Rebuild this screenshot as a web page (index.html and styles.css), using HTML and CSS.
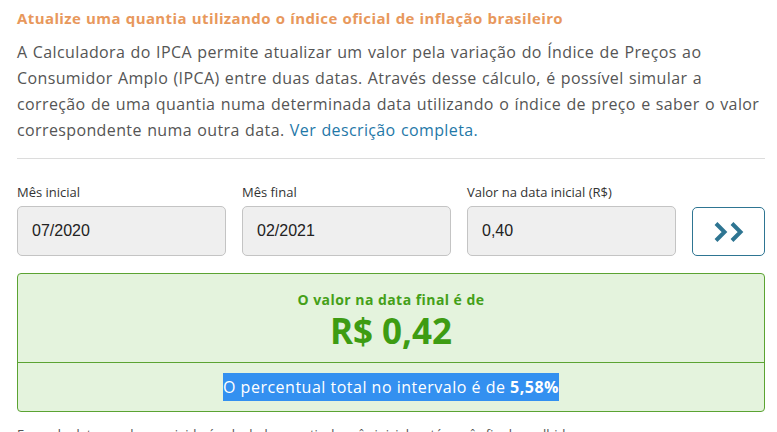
FILE: index.html
```html
<!DOCTYPE html>
<html lang="pt-BR">
<head>
<meta charset="utf-8">
<title>Calculadora do IPCA</title>
<link rel="stylesheet" href="styles.css">
</head>
<body>
<main class="page">
  <h2 class="title">Atualize uma quantia utilizando o índice oficial de inflação brasileiro</h2>
  <p class="intro">A Calculadora do IPCA permite atualizar um valor pela variação do Índice de Preços ao Consumidor Amplo (IPCA) entre duas datas. Através desse cálculo, é possível simular a correção de uma quantia numa determinada data utilizando o índice de preço e saber o valor correspondente numa outra data. <a class="link" href="#">Ver descrição completa.</a></p>
  <hr class="rule">
  <form class="calc">
    <label class="field">
      <span class="label">Mês inicial</span>
      <span class="input">07/2020</span>
    </label>
    <label class="field">
      <span class="label">Mês final</span>
      <span class="input">02/2021</span>
    </label>
    <label class="field">
      <span class="label">Valor na data inicial (R$)</span>
      <span class="input">0,40</span>
    </label>
    <button class="go" type="button" aria-label="Calcular">
      <svg width="32" height="22" viewBox="0 0 32 22" aria-hidden="true">
        <path d="M3 2.5 L11.5 11 L3 19.5" fill="none" stroke="#2e7592" stroke-width="4" stroke-linecap="butt" stroke-linejoin="miter"/>
        <path d="M19 2.5 L27.5 11 L19 19.5" fill="none" stroke="#2e7592" stroke-width="4" stroke-linecap="butt" stroke-linejoin="miter"/>
      </svg>
    </button>
  </form>
  <section class="result">
    <div class="result-top">
      <div class="result-caption">O valor na data final é de</div>
      <div class="result-value">R$ 0,42</div>
    </div>
    <div class="result-bottom">
      <span class="selected">O percentual total no intervalo é de <b>5,58%</b></span>
    </div>
  </section>
  <p class="note">Em cada data, o valor corrigido é calculado a partir do mês inicial e até o mês final escolhido.</p>
</main>
</body>
</html>
```

FILE: styles.css
```css
html, body {
  margin: 0;
  padding: 0;
  background: #ffffff;
}

body {
  font-family: "Open Sans", "Noto Sans", sans-serif;
  color: #555555;
  overflow: hidden;
  height: 432px;
}

.page {
  padding: 8px 12px 0 17px;
}

.title {
  margin: 0;
  font-size: 15px;
  line-height: 20px;
  font-weight: 700;
  letter-spacing: 0.4px;
  word-spacing: 0.5px;
  color: #e8985c;
}

.intro {
  margin: 11px 0 0;
  font-size: 16px;
  line-height: 26px;
  letter-spacing: 0.38px;
  word-spacing: 0.8px;
  color: #555555;
}

.link {
  color: #1f78a8;
  text-decoration: none;
}

.rule {
  margin: 15px 0 0;
  border: 0;
  border-top: 1px solid #dcdcdc;
  height: 0;
}

.calc {
  display: grid;
  grid-template-columns: 209px 209px 209px 1fr;
  column-gap: 16px;
  align-items: end;
  margin-top: 24px;
}

.field {
  display: flex;
  flex-direction: column;
  gap: 5px;
}

.label {
  font-size: 13px;
  line-height: 18px;
  color: #333333;
}

.input {
  box-sizing: border-box;
  height: 50px;
  display: flex;
  align-items: center;
  padding: 0 14px;
  background: #efefef;
  border: 1px solid #c4c4c4;
  border-radius: 5px;
  font-family: "Liberation Sans", Arial, sans-serif;
  font-size: 16px;
  color: #222222;
}

.go {
  box-sizing: border-box;
  height: 49px;
  display: flex;
  align-items: center;
  justify-content: center;
  background: #ffffff;
  border: 1px solid #2e7592;
  border-radius: 5px;
  padding: 0;
  cursor: pointer;
}

.result {
  margin-top: 17px;
  background: #e4f3dd;
  border: 1px solid #5ba332;
  border-radius: 4px;
}

.result-top {
  padding: 16px 0 10px;
  text-align: center;
  border-bottom: 1px solid #5ba332;
}

.result-caption {
  font-size: 14px;
  line-height: 20px;
  font-weight: 700;
  letter-spacing: 0.45px;
  color: #44a018;
}

.result-value {
  font-size: 35px;
  line-height: 42px;
  font-weight: 700;
  color: #3d9c12;
}

.result-bottom {
  padding: 11px 0 11px;
  text-align: center;
  font-size: 16px;
  line-height: 26px;
  letter-spacing: 0.5px;
}

.selected {
  background: #3390f0;
  color: #ffffff;
  padding: 3px 0;
}

.selected b {
  font-weight: 700;
}

.note {
  margin: 13px 0 0;
  font-size: 13px;
  line-height: 18px;
  color: #555555;
}
```
